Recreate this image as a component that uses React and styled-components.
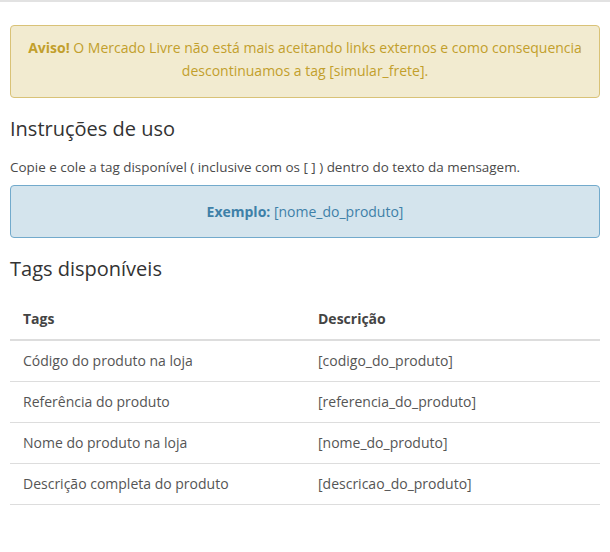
import React from "react";
import styled, { createGlobalStyle } from "styled-components";

const tags = [
  { label: "Código do produto na loja", tag: "[codigo_do_produto]" },
  { label: "Referência do produto", tag: "[referencia_do_produto]" },
  { label: "Nome do produto na loja", tag: "[nome_do_produto]" },
  { label: "Descrição completa do produto", tag: "[descricao_do_produto]" },
];

const App = () => {
  return (
    <Page>
      <GlobalStyle />
      <Alert variant="warning">
        <strong>Aviso!</strong> O Mercado Livre não está mais aceitando links
        externos e como consequencia descontinuamos a tag [simular_frete].
      </Alert>

      <Title>Instruções de uso</Title>
      <Text>
        Copie e cole a tag disponível ( inclusive com os [ ] ) dentro do texto
        da mensagem.
      </Text>
      <Alert variant="info">
        <strong>Exemplo:</strong> [nome_do_produto]
      </Alert>

      <Title>Tags disponíveis</Title>
      <Table>
        <thead>
          <tr>
            <HeadCell>Tags</HeadCell>
            <HeadCell>Descrição</HeadCell>
          </tr>
        </thead>
        <tbody>
          {tags.map((row) => (
            <tr key={row.tag}>
              <Cell>{row.label}</Cell>
              <Cell>{row.tag}</Cell>
            </tr>
          ))}
        </tbody>
      </Table>
    </Page>
  );
};

const GlobalStyle = createGlobalStyle`
  html, body {
    margin: 0;
    padding: 0;
    background: #fff;
  }
  body {
    font-family: "Open Sans", "Liberation Sans", sans-serif;
    color: #555;
  }
`;

const alertColors = {
  warning: { bg: "#f2ebd0", border: "#d9c277", text: "#c29f2c" },
  info: { bg: "#d4e4ed", border: "#72aacc", text: "#3e80a8" },
};

const Page = styled.div`
  border-top: 2px solid #e2e2e2;
  padding: 23px 10px 40px;
`;

const Alert = styled.div`
  background: ${(p) => alertColors[p.variant].bg};
  border: 1px solid ${(p) => alertColors[p.variant].border};
  color: ${(p) => alertColors[p.variant].text};
  border-radius: 4px;
  text-align: center;
  font-size: 14px;
  line-height: ${(p) => (p.variant === "warning" ? "23px" : "21px")};
  padding: ${(p) => (p.variant === "warning" ? "10px 15px 15px" : "15px")};

  strong {
    font-weight: 700;
  }
`;

const Title = styled.h3`
  margin: 20px 0 0;
  font-size: 20px;
  line-height: 22px;
  font-weight: 400;
  color: #333;
`;

const Text = styled.p`
  margin: 18px 0 9px;
  font-size: 13.45px;
  line-height: 18px;
  color: #4a4a4a;
`;

const Table = styled.table`
  width: 100%;
  margin-top: 18px;
  border-collapse: collapse;
  font-size: 14px;
`;

const HeadCell = styled.th`
  width: 50%;
  text-align: left;
  font-weight: 700;
  color: #444;
  padding: 12px 13px;
  line-height: 17px;
  border-bottom: 2px solid #ddd;
`;

const Cell = styled.td`
  padding: 12px 13px;
  line-height: 16px;
  color: #555;
  border-bottom: 1px solid #ddd;
`;

export default App;
